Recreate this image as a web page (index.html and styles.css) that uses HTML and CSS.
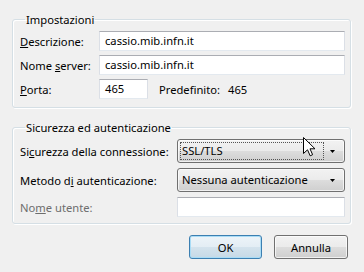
FILE: index.html
```html
<!DOCTYPE html>
<html lang="it">
<head>
  <meta charset="UTF-8"/>
  <title>Impostazioni server</title>
  <link rel="stylesheet" href="styles.css">
</head>
<body>

<div class="dialog">
  <fieldset class="group">
    <legend>Impostazioni</legend>
    <div class="row">
      <label class="lbl"><u>D</u>escrizione:</label>
      <div class="textbox">cassio.mib.infn.it</div>
    </div>
    <div class="row">
      <label class="lbl">Nome <u>s</u>erver:</label>
      <div class="textbox">cassio.mib.infn.it</div>
    </div>
    <div class="row port-row">
      <label class="lbl"><u>P</u>orta:</label>
      <div class="textbox">465</div>
      <span class="default-lbl">Predefinito:</span>
      <span class="default-val">465</span>
    </div>
  </fieldset>

  <fieldset class="group security">
    <legend>Sicurezza ed autenticazione</legend>
    <div class="row">
      <label class="lbl">Si<u>c</u>urezza della connessione:</label>
      <div class="combo">
        <span class="combo-text focused">SSL/TLS</span>
        <svg class="arrow" width="5" height="3" viewBox="0 0 5 3"><polygon points="0,0 5,0 2.5,3" fill="#000"/></svg>
        <svg class="cursor" width="13" height="20" viewBox="0 0 13 20">
          <path d="M0.5,0.5 L0.5,16.5 L4.5,12.8 L7.2,18.8 L9.6,17.7 L7,11.8 L12,11.8 Z" fill="#fff" stroke="#000" stroke-width="1"/>
        </svg>
      </div>
    </div>
    <div class="row">
      <label class="lbl">Metodo d<u>i</u> autenticazione:</label>
      <div class="combo">
        <span class="combo-text">Nessuna autenticazione</span>
        <svg class="arrow" width="5" height="3" viewBox="0 0 5 3"><polygon points="0,0 5,0 2.5,3" fill="#000"/></svg>
      </div>
    </div>
    <div class="row">
      <label class="lbl disabled">No<u>m</u>e utente:</label>
      <div class="textbox"></div>
    </div>
  </fieldset>

  <div class="buttons">
    <button class="btn default">OK</button>
    <button class="btn">Annulla</button>
  </div>
</div>

</body>
</html>
```

FILE: styles.css
```css
* { box-sizing: border-box; }
body {
  margin: 0; padding: 12px 13px 0 12px;
  background: #f0f0f0; color: #000;
  font-family: "Noto Sans", sans-serif; font-size: 11.2px;
}
.dialog { width: 339px; }
.group {
  margin: 0; padding: 4px 5px 8px 7px;
  border: 1px solid #d5dfe5; border-radius: 3px;
  box-shadow: inset 1px 1px 0 #fff, 1px 1px 0 #fff;
}
.group legend {
  padding: 0 1px; margin-left: 5px;
  line-height: 15px; height: 15px;
}
.group.security { margin-top: 12px; padding-bottom: 6px; }
.row {
  display: grid; grid-template-columns: 79px 1fr;
  align-items: center; margin-bottom: 4px;
}
.row:last-child { margin-bottom: 0; }
.security .row { grid-template-columns: 157px 1fr; margin-bottom: 5px; }
.security .row:last-child { margin-bottom: 0; }
.lbl { line-height: 15px; white-space: nowrap; }
.lbl.disabled { color: #6d6d6d; }
.textbox {
  height: 20px; padding: 0 5px; line-height: 18px;
  background: #fff;
  border: 1px solid #dbdfe6; border-top-color: #abadb3; border-bottom-color: #e3e9ef;
}
.port-row { grid-template-columns: 79px 49px auto auto; justify-content: start; }
.default-lbl { margin-left: 11px; }
.default-val { margin-left: 8px; }
.combo {
  position: relative;
  display: flex; align-items: center;
  height: 24px; padding: 2px 0 2px 2px;
  border: 1px solid #707070; border-radius: 3px;
  background: linear-gradient(#f2f2f2 0, #ebebeb 50%, #dddddd 50%, #cfcfcf 100%);
  box-shadow: inset 0 0 0 1px rgba(255,255,255,0.7);
}
.combo-text {
  width: 144px; height: 18px; line-height: 16px;
  padding: 0 1px; border: 1px dotted transparent;
}
.combo-text.focused { border-color: #555; }
.arrow { margin-left: 6px; }
.cursor { position: absolute; left: 125px; top: -3px; }
.buttons {
  display: flex; justify-content: flex-end; gap: 12px;
  margin-top: 11px; padding-right: 3px;
}
.btn {
  width: 74px; height: 24px; padding: 0;
  font: inherit; color: #000;
  border: 1px solid #707070; border-radius: 3px;
  background: linear-gradient(#f2f2f2 0, #ebebeb 50%, #dddddd 50%, #cfcfcf 100%);
  box-shadow: inset 0 0 0 1px rgba(255,255,255,0.7);
}
.btn.default {
  width: 73px; border-color: #3c7fb1;
  background: linear-gradient(#edf4f9 0, #e3edf4 50%, #d4e3ed 50%, #c6d9e6 100%);
  box-shadow: inset 0 0 0 1px #a9dcf6;
}
```
